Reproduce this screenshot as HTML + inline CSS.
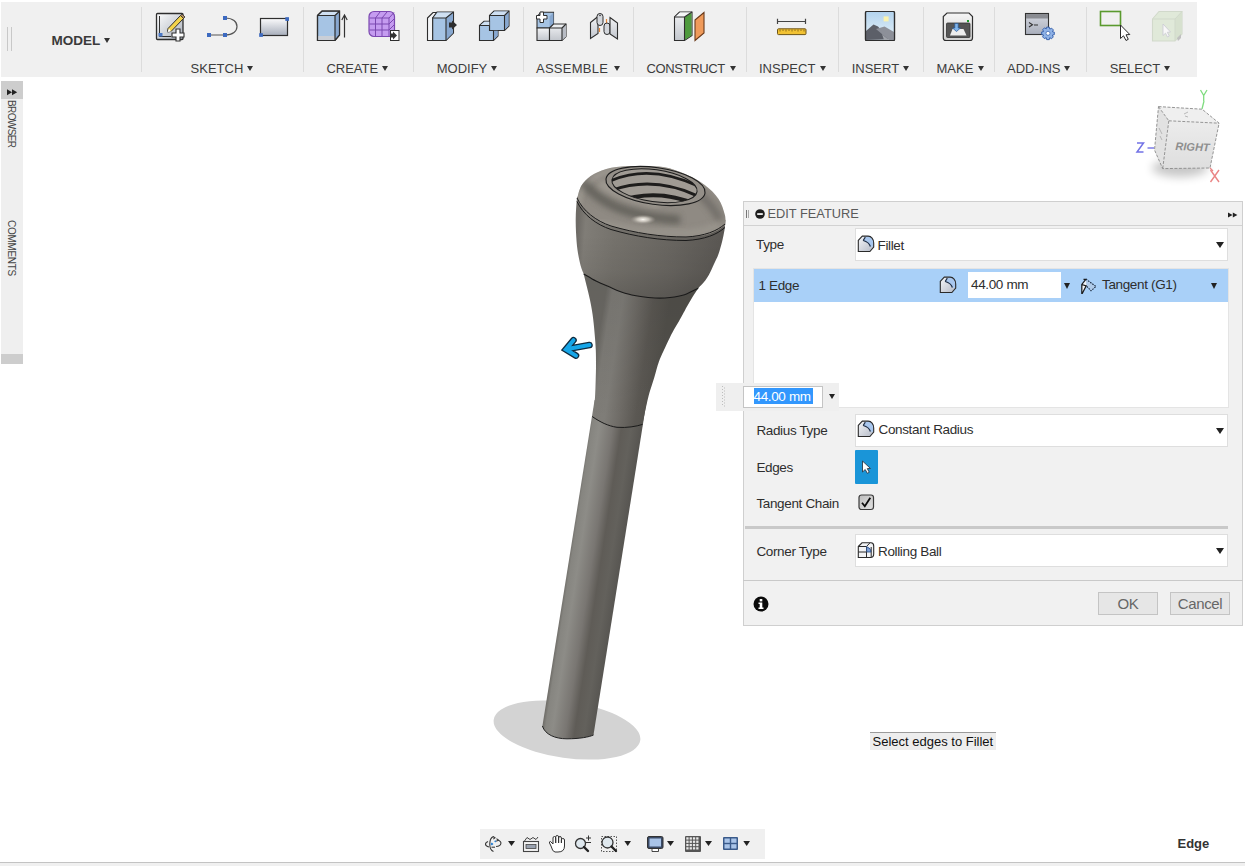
<!DOCTYPE html>
<html><head><meta charset="utf-8">
<style>
*{margin:0;padding:0;box-sizing:border-box}
html,body{width:1245px;height:866px;overflow:hidden;background:#fff;font-family:"Liberation Sans",sans-serif;color:#333}
.abs{position:absolute}
#tb{position:absolute;left:1px;top:2px;width:1196px;height:75px;background:#f0f0f0}
.sep{position:absolute;top:7px;width:1px;height:65px;background:#dcdcdc}
.lbl{position:absolute;top:62px;font-size:13px;color:#3c3c3c;white-space:nowrap;line-height:14px}
.tri2{position:absolute;width:0;height:0;border-left:3.2px solid transparent;border-right:3.2px solid transparent;border-top:5.5px solid #333}
.ico{position:absolute}
#sb{position:absolute;left:1px;top:81px;width:22px;height:283px;background:#efefef}
.vt{position:absolute;font-size:10px;line-height:10px;color:#444;transform-origin:0 0;transform:rotate(90deg);white-space:nowrap;letter-spacing:0.3px}
#dlg{position:absolute;left:743px;top:201px;width:500px;height:425px;background:#f1f1f1;border:1px solid #cfcfcf}
.dl{position:absolute;font-size:13.5px;letter-spacing:-0.35px;color:#2e2e2e;white-space:nowrap;line-height:15px}
.dd{position:absolute;background:#fff;border:1px solid #dedede}
.dtri{position:absolute;width:0;height:0;border-left:4px solid transparent;border-right:4px solid transparent;border-top:6px solid #222}
</style></head><body>

<!-- TOOLBAR -->
<div id="tb">
  <div class="abs" style="left:6px;top:25px;width:1px;height:24px;background:#c8c8c8"></div>
  <div class="abs" style="left:10px;top:25px;width:1px;height:24px;background:#c8c8c8"></div>
</div>
<div class="abs" style="left:51.5px;top:33px;font-size:13.5px;font-weight:bold;color:#3a3a3a;line-height:16px">MODEL</div>
<div class="tri2" style="left:103.5px;top:37.5px"></div>
<div class="sep" style="left:141px"></div>
<div class="sep" style="left:303px"></div>
<div class="sep" style="left:413px"></div>
<div class="sep" style="left:523px"></div>
<div class="sep" style="left:633px"></div>
<div class="sep" style="left:746px"></div>
<div class="sep" style="left:838px"></div>
<div class="sep" style="left:923px"></div>
<div class="sep" style="left:994px"></div>
<div class="sep" style="left:1086px"></div>
<div class="lbl" style="left:190.6px">SKETCH</div>
<div class="tri2" style="left:246.5px;top:65.5px"></div>
<div class="lbl" style="left:326.4px">CREATE</div>
<div class="tri2" style="left:382.0px;top:65.5px"></div>
<div class="lbl" style="left:436.7px">MODIFY</div>
<div class="tri2" style="left:490.8px;top:65.5px"></div>
<div class="lbl" style="left:536.0px;letter-spacing:0.25px">ASSEMBLE</div>
<div class="tri2" style="left:613.9px;top:65.5px"></div>
<div class="lbl" style="left:646.5px;letter-spacing:-0.35px">CONSTRUCT</div>
<div class="tri2" style="left:729.7px;top:65.5px"></div>
<div class="lbl" style="left:759.0px">INSPECT</div>
<div class="tri2" style="left:819.8px;top:65.5px"></div>
<div class="lbl" style="left:851.7px">INSERT</div>
<div class="tri2" style="left:902.6px;top:65.5px"></div>
<div class="lbl" style="left:936.5px">MAKE</div>
<div class="tri2" style="left:978.0px;top:65.5px"></div>
<div class="lbl" style="left:1007.0px">ADD-INS</div>
<div class="tri2" style="left:1064.0px;top:65.5px"></div>
<div class="lbl" style="left:1109.7px">SELECT</div>
<div class="tri2" style="left:1164.0px;top:65.5px"></div>

<svg class="abs" style="left:0;top:0" width="1245" height="80" viewBox="0 0 1245 80">
<defs>
<linearGradient id="gSk" x1="0" y1="0" x2="1" y2="1"><stop offset="0" stop-color="#fdfdfd"/><stop offset="1" stop-color="#a9b0bb"/></linearGradient>
<linearGradient id="gRc" x1="0" y1="0" x2="0" y2="1"><stop offset="0" stop-color="#fbfbfc"/><stop offset="1" stop-color="#a7aebb"/></linearGradient>
<linearGradient id="gBl" x1="0" y1="0" x2="0" y2="1"><stop offset="0" stop-color="#b4cdea"/><stop offset="1" stop-color="#92b4dc"/></linearGradient>
<linearGradient id="gGr" x1="0" y1="0" x2="0" y2="1"><stop offset="0" stop-color="#f2f3f5"/><stop offset="1" stop-color="#c2c6cd"/></linearGradient>
<linearGradient id="gSky" x1="0" y1="0" x2="0" y2="1"><stop offset="0" stop-color="#b3d3ee"/><stop offset="1" stop-color="#e6f2f8"/></linearGradient>
<linearGradient id="gMk" x1="0" y1="0" x2="0" y2="1"><stop offset="0" stop-color="#f6f6f6"/><stop offset="1" stop-color="#cfcfcf"/></linearGradient>
<linearGradient id="gAd" x1="0" y1="0" x2="0" y2="1"><stop offset="0" stop-color="#d5d8e0"/><stop offset="1" stop-color="#a9aebb"/></linearGradient>
</defs>
<!-- grip -->
<!-- Sketch create -->
<rect x="156.5" y="13.5" width="26.5" height="26" rx="1" fill="url(#gSk)" stroke="#2e2e2e" stroke-width="1.3"/>
<path d="M159.5 16 V36.5 H171" fill="none" stroke="#333" stroke-width="1"/>
<rect x="158.5" y="33" width="4" height="3.5" fill="#4a78c8"/>
<path d="M168 28.5 L180.5 15.5 L183.5 18.5 L171 31.5 L167.5 32 Z" fill="#f3d34a" stroke="#2e2e2e" stroke-width="1"/>
<path d="M180.5 15.5 L182 14 L185 17 L183.5 18.5 Z" fill="#b08a60" stroke="#2e2e2e" stroke-width="0.8"/>
<path d="M167.5 32 L169 28.5 L171 31.5 Z" fill="#fff"/>
<path d="M176 29 h4 v4 h4 v4 h-4 v4 h-4 v-4 h-4 v-4 h4 z" fill="#fff" stroke="#2e2e2e" stroke-width="1.1"/>
<!-- arc line -->
<path d="M209 35 H225 M225 18 C233 18 237 22 237 26.5 C237 31 233 35 225 35" fill="none" stroke="#555" stroke-width="1.2"/>
<rect x="207" y="33" width="4" height="4" fill="#3d6ac0"/>
<rect x="223" y="33" width="4" height="4" fill="#3d6ac0"/>
<rect x="223" y="16" width="4" height="4" fill="#3d6ac0"/>
<!-- rect -->
<rect x="260.5" y="18.5" width="27" height="17" fill="url(#gRc)" stroke="#2e2e2e" stroke-width="1.2"/>
<rect x="285.3" y="17.2" width="3.7" height="3.7" fill="#3d6ac0"/>
<rect x="259.2" y="33.2" width="3.7" height="3.7" fill="#3d6ac0"/>
<!-- extrude -->
<path d="M317.5 15.5 L322 11.2 H339.5 V35 L335 40.5 H317.5 Z" fill="#a6c4e4" stroke="#2e2e2e" stroke-width="1.2"/>
<path d="M317.5 15.5 L322 11.5 H339.3 L335 15.5 Z" fill="#cfe0f2"/>
<path d="M335 15.5 L339.3 11.5 V35 L335 40.3 Z" fill="#88a8d0"/>
<path d="M318 36 H335 V40 H318 Z" fill="#c9ced6"/>
<path d="M317.5 15.5 L322 11.2 H339.5 V35 L335 40.5 H317.5 Z M317.5 15.5 H335 V40.5 M335 15.5 L339.5 11.2" fill="none" stroke="#2e2e2e" stroke-width="1.2"/>
<path d="M344.5 37.5 V16" stroke="#333" stroke-width="1.2"/>
<path d="M341.8 20 L344.5 15 L347.2 20" fill="none" stroke="#333" stroke-width="1.2"/>
<!-- form -->
<rect x="369" y="11.5" width="25.5" height="25" rx="5" fill="#c59cf0" stroke="#7b48b0" stroke-width="1.2"/>
<path d="M369.5 18 H389 V36 M375.5 18 V36.5 M382 18 V36.5 M369.5 24 H389 M369.5 30 H389 M389 18 L394 12.5 M375.5 18 L380 12 M382 18 L387 12 M389 24 L394 19 M389 30 L394 25" fill="none" stroke="#7b48b0" stroke-width="1"/>
<rect x="390.5" y="30.5" width="8.5" height="10" fill="#fff" stroke="#2e2e2e" stroke-width="1"/>
<path d="M390 33.5 H393 V31.5 L397 35.5 L393 39.5 V37.5 H390 Z" fill="#333"/>
<!-- press pull -->
<path d="M427.5 18 L433 12.5 H437 L432.7 18 V40.5 H427.5 Z" fill="#f4f5f7" stroke="#2e2e2e" stroke-width="1.1"/>
<path d="M432.7 18 L437 12 H453.5 V33 L446 40.5 H432.7 Z" fill="#a6c4e4" stroke="#2e2e2e" stroke-width="1.1"/>
<path d="M433.5 18 L437.5 12.5 H453 L446 18 Z" fill="#cfe0f2"/>
<path d="M446 18 L453 12.5 V33 L446 40 Z" fill="#88a8d0"/>
<path d="M432.7 18 H446 V40.5 M446 18 L453.5 12" fill="none" stroke="#2e2e2e" stroke-width="1.1"/>
<path d="M449 22.5 H452 V20.5 L457 25 L452 29.5 V27.5 H449 Z" fill="#2e2e2e"/>
<!-- combine -->
<path d="M489.5 15.5 L494 11 H509 V26 L504.5 30.5 H489.5 Z" fill="#a6c4e4" stroke="#2e2e2e" stroke-width="1.1"/>
<path d="M490 15.5 L494.5 11.5 H508.5 L504.5 15.5 Z" fill="#cfe0f2"/>
<path d="M504.5 15.5 L508.5 11.5 V26 L504.5 30 Z" fill="#88a8d0"/>
<path d="M489.5 15.5 H504.5 V30.5 M504.5 15.5 L509 11" fill="none" stroke="#2e2e2e" stroke-width="1.1"/>
<path d="M479.5 25.5 L484 21.3 H489.5 V30.5 H498 V36 L493.5 40.5 H479.5 Z" fill="#a6c4e4" stroke="#2e2e2e" stroke-width="1.1"/>
<path d="M480 25.5 L484.5 21.8 H489.3 V25.5 Z" fill="#cfe0f2"/>
<path d="M493.5 30.8 H497.7 V36 L493.5 40 Z" fill="#88a8d0"/>
<path d="M479.5 25.5 H489.5 M493.5 30.5 V40.5" fill="none" stroke="#2e2e2e" stroke-width="1.1"/>
<!-- assemble new component -->
<path d="M537 16.5 L541 12.2 H553.5 V24 L549.5 28 H537 Z" fill="#a6c4e4" stroke="#2e2e2e" stroke-width="1.1"/>
<path d="M549.5 16.5 L553.5 12.5 V24 L549.5 28 Z" fill="#88a8d0"/>
<path d="M537 28 H549.5 V40.5 H537 Z" fill="url(#gGr)" stroke="#2e2e2e" stroke-width="1.1"/>
<path d="M549.5 28 L553.5 24 H566 V36.5 L562 40.5 H549.5 Z" fill="url(#gGr)" stroke="#2e2e2e" stroke-width="1.1"/>
<path d="M562 28 L566 24 V36.5 L562 40.5 Z" fill="#b8bcc4"/>
<path d="M549.5 28 H562 V40.5 M562 28 L566 24" fill="none" stroke="#2e2e2e" stroke-width="1.1"/>
<path d="M540 12 h3.5 v3.5 h3.5 v3.5 h-3.5 v3.5 h-3.5 v-3.5 h-3.5 v-3.5 h3.5 z" fill="#fff" stroke="#2e2e2e" stroke-width="1"/>
<!-- joint -->
<path d="M590.5 22.5 L598 16.5 V33.5 L590.5 38.5 Z" fill="url(#gGr)" stroke="#2e2e2e" stroke-width="1.1"/>
<rect x="597" y="13.5" width="6" height="12" rx="3" fill="#d4d7dc" stroke="#2e2e2e" stroke-width="1"/>
<circle cx="600" cy="15.5" r="0.8" fill="#333"/>
<path d="M599.5 28 V32 M606.5 19 V23" stroke="#e8873a" stroke-width="1.2"/>
<rect x="604" y="23" width="6" height="11.5" rx="3" fill="#d4d7dc" stroke="#2e2e2e" stroke-width="1"/>
<path d="M610 17.5 L617.5 23 V39 L610 34 Z" fill="url(#gGr)" stroke="#2e2e2e" stroke-width="1.1"/>
<!-- construct -->
<path d="M674.5 17 L679.5 12 H692 V35.5 L684.5 40.5 H674.5 Z" fill="url(#gGr)" stroke="#2e2e2e" stroke-width="1.1"/>
<path d="M684.5 17 L691.5 12.5 V35.5 L684.5 40 Z" fill="#4e9a3e"/>
<path d="M675 17 L680 12.5 H691.5 L684.5 17 Z" fill="#f6f7f8"/>
<path d="M674.5 17 H684.5 V40.5 M684.5 17 L692 12" fill="none" stroke="#2e2e2e" stroke-width="1.1"/>
<path d="M695 20 L704 12.5 V33 L695 40.5 Z" fill="#ef9a5a" stroke="#6a3a1a" stroke-width="1.1"/>
<!-- inspect -->
<path d="M777.5 21.5 H805.5 M777.5 18.7 V24 M805.5 18.7 V24" stroke="#444" stroke-width="1.2"/>
<rect x="777.5" y="28.8" width="28.5" height="5.8" rx="1" fill="#f2c233" stroke="#6e5518" stroke-width="1"/>
<path d="M780 29.5 v2 M783 29.5 v1.5 M786 29.5 v2 M789 29.5 v1.5 M792 29.5 v2 M795 29.5 v1.5 M798 29.5 v2 M801 29.5 v1.5 M804 29.5 v2" stroke="#7a5a10" stroke-width="0.8"/>
<!-- insert -->
<rect x="865.5" y="11.5" width="29" height="29" rx="1" fill="url(#gSky)" stroke="#2e2e2e" stroke-width="1.2"/>
<rect x="883.6" y="16.4" width="5" height="5" fill="#fbf3b0"/>
<path d="M866 31 L873.5 24.5 L878 26.5 L889 39.5 L866 40 Z" fill="#5c5f68"/>
<path d="M876 29 L884.5 26.5 L894 32 V40 H889 Z" fill="#8d9099"/>
<path d="M882 34 L884 36 L889 40 H884 Z" fill="#a0a3aa"/>
<rect x="865.5" y="11.5" width="29" height="29" rx="1" fill="none" stroke="#2e2e2e" stroke-width="1.2"/>
<!-- make -->
<path d="M947 13 H969 L972.5 16.5 V38 Q972.5 40.5 970 40.5 H946 Q943.3 40.5 943.3 38 V16.5 Z" fill="url(#gMk)" stroke="#2e2e2e" stroke-width="1.2"/>
<rect x="946.5" y="23" width="23.5" height="14.5" rx="1" fill="#555" stroke="#333" stroke-width="0.8"/>
<path d="M950 35.5 L952.5 29 H963.5 L966.5 35.5 Z" fill="#eeeeee"/>
<path d="M954.8 23.5 H958.2 V28 H960.5 L956.5 31.5 L952.5 28 H954.8 Z" fill="#7fb4ea" stroke="#2a5a9a" stroke-width="0.7"/>
<rect x="967" y="20" width="2" height="2" fill="#1c9a2a"/>
<!-- add-ins -->
<rect x="1025.5" y="13.5" width="23" height="21" fill="url(#gAd)" stroke="#333" stroke-width="1.1"/>
<rect x="1026" y="14" width="22" height="4.5" fill="#8a8c92"/>
<path d="M1029 22.5 L1032.5 24.7 L1029 27 M1034 25 H1038" fill="none" stroke="#333" stroke-width="1.1"/>
<g transform="translate(1048 33.3) scale(0.88)">
<path d="M-1.5 -7 H1.5 L2 -4.8 L4.2 -5.8 L6.2 -3.8 L5 -1.8 L7.2 -1.3 V1.5 L5 2 L6 4.2 L4 6.2 L2 5 L1.5 7.2 H-1.5 L-2 5 L-4.2 6 L-6.2 4 L-5 2 L-7.2 1.5 V-1.5 L-5 -2 L-6 -4.2 L-4 -6.2 L-2 -5 Z" fill="#8fb2e6" stroke="#2f5aa8" stroke-width="1"/>
<circle r="2.3" fill="#fff" stroke="#2f5aa8" stroke-width="0.8"/>
</g>
<!-- select -->
<rect x="1100.5" y="11.5" width="20" height="14" fill="none" stroke="#5a9a2e" stroke-width="1.6"/>
<path d="M1120.5 25 V38.5 L1123.5 35.8 L1126 40.5 L1128.3 39.3 L1126 34.8 L1129.8 34.5 Z" fill="#fff" stroke="#2a2a2a" stroke-width="1"/>
<g opacity="0.55">
<path d="M1152.5 19 L1159 11.5 H1182 V34 L1175 41 H1152.5 Z" fill="#d4e4c8" stroke="#b9c7ad" stroke-width="1.1"/>
<path d="M1175 19 L1182 11.5 V34 L1175 41 Z" fill="#c3d6b5"/>
<path d="M1152.5 19 H1175 V41 M1175 19 L1182 11.5" fill="none" stroke="#b9c7ad" stroke-width="1"/>
<path d="M1163 24 V35.5 L1165.5 33.2 L1167.5 37 L1169.3 36 L1167.3 32.3 L1170.5 32 Z" fill="#fff" stroke="#aab" stroke-width="0.8"/>
<path d="M1177 38 L1181 34 V38 L1178 41 Z" fill="#999"/>
</g>
</svg>

<!-- MODEL -->
<svg class="abs" style="left:0;top:0" width="1245" height="866" viewBox="0 0 1245 866">
<defs>
<linearGradient id="gShaft" gradientUnits="userSpaceOnUse" x1="562" y1="600" x2="614" y2="608">
 <stop offset="0" stop-color="#6e6c67"/><stop offset="0.06" stop-color="#868580"/><stop offset="0.2" stop-color="#8d8c87"/>
 <stop offset="0.45" stop-color="#797672"/><stop offset="0.62" stop-color="#5f5c57"/><stop offset="0.8" stop-color="#63615c"/><stop offset="1" stop-color="#575551"/>
</linearGradient>
<linearGradient id="gNeck" gradientUnits="userSpaceOnUse" x1="592" y1="380" x2="656" y2="390">
 <stop offset="0" stop-color="#6c6a65"/><stop offset="0.1" stop-color="#7e7c77"/><stop offset="0.28" stop-color="#7f7d78"/>
 <stop offset="0.5" stop-color="#6f6c67"/><stop offset="0.75" stop-color="#5b5853"/><stop offset="1" stop-color="#52504b"/>
</linearGradient>
<linearGradient id="gNeckV" gradientUnits="userSpaceOnUse" x1="0" y1="290" x2="0" y2="420">
 <stop offset="0" stop-color="#000" stop-opacity="0.07"/><stop offset="0.6" stop-color="#000" stop-opacity="0.03"/><stop offset="1" stop-color="#000" stop-opacity="0"/>
</linearGradient>
<linearGradient id="gBody" gradientUnits="userSpaceOnUse" x1="576" y1="250" x2="724" y2="262">
 <stop offset="0" stop-color="#6e6b66"/><stop offset="0.05" stop-color="#807d77"/><stop offset="0.25" stop-color="#75726c"/>
 <stop offset="0.65" stop-color="#686560"/><stop offset="1" stop-color="#595652"/>
</linearGradient>
<linearGradient id="gBodyV" gradientUnits="userSpaceOnUse" x1="0" y1="235" x2="0" y2="296">
 <stop offset="0" stop-color="#000" stop-opacity="0"/><stop offset="0.6" stop-color="#000" stop-opacity="0.05"/><stop offset="1" stop-color="#000" stop-opacity="0.14"/>
</linearGradient>
<linearGradient id="gCapV" gradientUnits="userSpaceOnUse" x1="0" y1="165" x2="0" y2="238">
 <stop offset="0" stop-color="#8f8b85"/><stop offset="0.4" stop-color="#8a8680"/><stop offset="0.72" stop-color="#9a968e"/><stop offset="1" stop-color="#7b7873"/>
</linearGradient>
<radialGradient id="gHi" cx="0.5" cy="0.5" r="0.5"><stop offset="0" stop-color="#fbf8f2"/><stop offset="0.45" stop-color="#d6d1c8" stop-opacity="0.8"/><stop offset="1" stop-color="#a09b93" stop-opacity="0"/></radialGradient>
<filter id="blur3" x="-20%" y="-20%" width="140%" height="140%"><feGaussianBlur stdDeviation="3"/></filter>
<filter id="blur2" x="-20%" y="-20%" width="140%" height="140%"><feGaussianBlur stdDeviation="2"/></filter>
<clipPath id="cCap"><path id="capP" d="M577.1 199.5 C577.5 198.0 578.2 193.3 579.3 190.5 C580.4 187.7 581.1 185.4 583.5 182.7 C585.9 179.9 589.3 176.5 593.9 174.0 C598.5 171.5 604.5 169.0 611.2 167.7 C617.9 166.4 625.6 166.1 634.3 166.0 C642.9 165.9 654.5 165.7 663.1 167.1 C671.8 168.5 679.3 171.6 686.2 174.6 C693.1 177.6 699.3 180.9 704.7 185.0 C710.1 189.1 715.1 193.9 718.5 198.9 C721.9 203.9 723.8 210.7 724.9 215.0 C726.0 219.3 725.3 223.3 725.4 225.0 C716 233 705 236.5 686 237.5 C660 237.5 635 233 611 226.5 C596 222 583 212 577.1 199.5 Z"/></clipPath>
<clipPath id="cHole"><ellipse cx="656" cy="186" rx="51" ry="18.5" transform="rotate(8 656 186)"/></clipPath>
</defs>
<!-- shadow -->
<ellipse cx="567" cy="730" rx="74" ry="28" transform="rotate(8 567 730)" fill="#d3d3d3"/>
<!-- shaft -->
<path d="M594.6 400 L542.4 726 C545 734.5 555 738.8 567 738.8 C580 738.8 589 737 593.5 735 L646.8 400 Z" fill="url(#gShaft)"/>
<path d="M542.4 726 C545 734.5 555 738.8 567 738.8 C580 738.8 589 737 593.5 735" fill="none" stroke="#222" stroke-width="1"/>
<!-- neck -->
<path d="M583.7 273.9 C584.2 276.0 585.8 282.1 586.8 286.4 C587.8 290.7 589.0 295.2 590.0 299.9 C591.0 304.6 591.8 308.9 592.6 314.5 C593.4 320.1 594.1 327.3 594.6 333.2 C595.1 339.1 595.6 344.7 595.8 350.0 C596.0 355.3 596.0 360.0 596.0 365.0 C596.0 370.0 595.9 374.6 595.7 380.0 C595.5 385.4 595.4 391.9 595.0 397.4 C594.6 402.9 593.8 409.7 593.4 413.0 C593.0 416.3 592.6 416.4 592.4 417.1 C600 422 608 426 617 427.3 C627 428 636 426.5 642.6 423.9 C642.8 422.7 643.3 419.9 644.0 416.5 C644.7 413.1 645.9 407.6 646.8 403.6 C647.7 399.6 648.3 396.8 649.5 392.5 C650.7 388.2 652.7 382.8 654.2 377.7 C655.8 372.6 657.2 366.4 658.8 362.0 C660.3 357.6 661.6 355.1 663.5 351.0 C665.4 346.9 668.1 341.1 669.9 337.5 C671.6 333.9 672.5 332.2 674.0 329.5 C675.5 326.8 677.2 324.2 678.8 321.4 C680.4 318.6 682.2 315.2 683.7 312.5 C685.2 309.8 686.2 307.8 687.7 305.2 C689.2 302.6 690.8 299.9 692.5 297.1 C694.2 294.3 697.2 289.7 698.2 288.2 L700 284 L650 280 Z" fill="url(#gNeck)"/>
<path d="M583.7 273.9 C584.2 276.0 585.8 282.1 586.8 286.4 C587.8 290.7 589.0 295.2 590.0 299.9 C591.0 304.6 591.8 308.9 592.6 314.5 C593.4 320.1 594.1 327.3 594.6 333.2 C595.1 339.1 595.6 344.7 595.8 350.0 C596.0 355.3 596.0 360.0 596.0 365.0 C596.0 370.0 595.9 374.6 595.7 380.0 C595.5 385.4 595.4 391.9 595.0 397.4 C594.6 402.9 593.8 409.7 593.4 413.0 C593.0 416.3 592.6 416.4 592.4 417.1 C600 422 608 426 617 427.3 C627 428 636 426.5 642.6 423.9 C642.8 422.7 643.3 419.9 644.0 416.5 C644.7 413.1 645.9 407.6 646.8 403.6 C647.7 399.6 648.3 396.8 649.5 392.5 C650.7 388.2 652.7 382.8 654.2 377.7 C655.8 372.6 657.2 366.4 658.8 362.0 C660.3 357.6 661.6 355.1 663.5 351.0 C665.4 346.9 668.1 341.1 669.9 337.5 C671.6 333.9 672.5 332.2 674.0 329.5 C675.5 326.8 677.2 324.2 678.8 321.4 C680.4 318.6 682.2 315.2 683.7 312.5 C685.2 309.8 686.2 307.8 687.7 305.2 C689.2 302.6 690.8 299.9 692.5 297.1 C694.2 294.3 697.2 289.7 698.2 288.2 L700 284 L650 280 Z" fill="url(#gNeckV)"/>
<!-- body -->
<path d="M577.0 197.0 C576.8 200.0 576.0 209.2 575.8 215.0 C575.6 220.8 575.7 226.2 576.0 232.0 C576.3 237.8 576.7 244.4 577.5 250.0 C578.3 255.6 579.6 261.6 580.6 265.6 C581.6 269.6 583.2 272.5 583.7 273.9 C585.8 275.1 591.9 278.9 596.0 281.0 C600.1 283.1 603.8 284.6 608.6 286.6 C613.4 288.6 619.6 291.6 625.0 293.2 C630.4 294.8 635.7 295.7 640.7 296.5 C645.7 297.3 650.1 297.8 655.0 298.0 C659.9 298.2 665.1 298.1 670.0 297.5 C674.9 296.9 679.8 296.2 684.5 294.7 C689.2 293.1 695.9 289.3 698.2 288.2 C699.2 287.2 702.2 284.2 704.0 282.0 C705.8 279.8 707.1 278.0 708.8 275.0 C710.5 272.0 712.4 267.5 714.0 264.0 C715.6 260.5 717.2 257.7 718.5 254.0 C719.8 250.3 721.0 246.0 722.0 242.0 C723.0 238.0 723.9 233.7 724.5 230.0 C725.1 226.3 725.2 221.7 725.4 220.0 L700 200 L600 190 Z" fill="url(#gBody)"/>
<path d="M577.0 197.0 C576.8 200.0 576.0 209.2 575.8 215.0 C575.6 220.8 575.7 226.2 576.0 232.0 C576.3 237.8 576.7 244.4 577.5 250.0 C578.3 255.6 579.6 261.6 580.6 265.6 C581.6 269.6 583.2 272.5 583.7 273.9 C585.8 275.1 591.9 278.9 596.0 281.0 C600.1 283.1 603.8 284.6 608.6 286.6 C613.4 288.6 619.6 291.6 625.0 293.2 C630.4 294.8 635.7 295.7 640.7 296.5 C645.7 297.3 650.1 297.8 655.0 298.0 C659.9 298.2 665.1 298.1 670.0 297.5 C674.9 296.9 679.8 296.2 684.5 294.7 C689.2 293.1 695.9 289.3 698.2 288.2 C699.2 287.2 702.2 284.2 704.0 282.0 C705.8 279.8 707.1 278.0 708.8 275.0 C710.5 272.0 712.4 267.5 714.0 264.0 C715.6 260.5 717.2 257.7 718.5 254.0 C719.8 250.3 721.0 246.0 722.0 242.0 C723.0 238.0 723.9 233.7 724.5 230.0 C725.1 226.3 725.2 221.7 725.4 220.0 L700 200 L600 190 Z" fill="url(#gBodyV)"/>
<!-- cap -->
<use href="#capP" fill="#8f8a83"/>
<g clip-path="url(#cCap)">
  <path d="M579 206 C578 192 588 180 603 173 C625 165 665 164 692 174 C708 181 720 192 726 206" fill="none" stroke="#a09c94" stroke-width="4" filter="url(#blur2)" opacity="0.9"/>
  <path d="M583 182 C595 197 610 206 630 212 C648 217 662 219 680 220" fill="none" stroke="#615e59" stroke-width="9" filter="url(#blur3)" opacity="0.9"/>
  <path d="M600 183 C612 192 630 198 660 204" fill="none" stroke="#a8a39a" stroke-width="7" filter="url(#blur3)" opacity="0.8"/>
  <path d="M594 222 C615 229 645 233 690 233 C705 232 714 228 720 223" fill="none" stroke="#a29e95" stroke-width="6" filter="url(#blur3)" opacity="0.7"/>
  <path d="M698 193 C710 203 716 212 720 220" fill="none" stroke="#64615c" stroke-width="7" filter="url(#blur3)" opacity="0.7"/>
</g>
<ellipse cx="643" cy="219.5" rx="13" ry="4.8" fill="url(#gHi)"/>
<!-- hole -->
<g transform="rotate(8 655.5 186)">
<ellipse cx="655.5" cy="186" rx="50" ry="18.5" fill="#948f88" stroke="#1c1c1c" stroke-width="1.1"/>
</g>
<clipPath id="cHole2"><ellipse cx="654.5" cy="185.7" rx="43" ry="16" transform="rotate(8 654.5 185.7)"/></clipPath>
<g clip-path="url(#cHole2)">
<rect x="600" y="160" width="110" height="50" fill="#a09b94"/>
<g fill="none" stroke="#1e1d1c">
<path d="M608 182 Q650 162 702 188" stroke-width="2.8"/>
<path d="M610 191 Q655 174 704 199" stroke-width="3"/>
<path d="M616 202 Q660 186 704 208" stroke-width="4"/>
</g>
</g>
<g transform="rotate(8 654.5 185.7)"><ellipse cx="654.5" cy="185.7" rx="43" ry="16" fill="none" stroke="#1c1c1c" stroke-width="1"/></g>
<!-- seams -->
<path d="M577 198 C583 211 596 221 611 226 C635 233 660 237 686 237 C705 236 717 231 725 224" fill="none" stroke="#1a1a1a" stroke-width="1"/>
<path d="M577 201.5 C583 214.5 596 224.5 611 229.5 C635 236.5 660 240.5 686 240.5 C705 239.5 717 234.5 725 227.5" fill="none" stroke="#1a1a1a" stroke-width="1"/>
<path d="M583.7 273.9 C585.8 275.1 591.9 278.9 596.0 281.0 C600.1 283.1 603.8 284.6 608.6 286.6 C613.4 288.6 619.6 291.6 625.0 293.2 C630.4 294.8 635.7 295.7 640.7 296.5 C645.7 297.3 650.1 297.8 655.0 298.0 C659.9 298.2 665.1 298.1 670.0 297.5 C674.9 296.9 679.8 296.2 684.5 294.7 C689.2 293.1 695.9 289.3 698.2 288.2" fill="none" stroke="#1a1a1a" stroke-width="1.1"/>
<path d="M592.2 416.5 C600 422 608 426 617 427.3 C627 428 636 426.5 642.5 424.4" fill="none" stroke="#1a1a1a" stroke-width="1"/>
<!-- arrow -->
<path d="M589.5 345 L567.5 349 M573.5 340.2 L565.8 349.4 L576 355.6" fill="none" stroke="#102c40" stroke-width="6.6" stroke-linecap="round" stroke-linejoin="miter"/>
<path d="M589.5 345 L567.5 349 M573.5 340.2 L565.8 349.4 L576 355.6" fill="none" stroke="#16a6e8" stroke-width="4" stroke-linecap="round" stroke-linejoin="miter"/>
</svg>

<!-- SIDEBAR -->
<div id="sb">
  <div class="abs" style="left:0;top:0;width:22px;height:18px;background:#cdcdcd"></div>
  <svg class="abs" style="left:6px;top:8px" width="11" height="7" viewBox="0 0 11 7"><path d="M0 0.3 L5 3.2 L0 6.2 Z M5 0.3 L10.2 3.2 L5 6.2 Z" fill="#222"/></svg>
  <div class="abs" style="left:0;top:273px;width:22px;height:10px;background:#cdcdcd"></div>
</div>
<div class="vt" style="left:16px;top:100px;letter-spacing:-0.6px">BROWSER</div>
<div class="vt" style="left:16px;top:220px;letter-spacing:-0.3px">COMMENTS</div>

<!-- DIALOG -->
<svg width="0" height="0" style="position:absolute">
  <defs>
    <linearGradient id="gF" x1="0" y1="0" x2="1" y2="1"><stop offset="0" stop-color="#f6f7f9"/><stop offset="1" stop-color="#b3b9c6"/></linearGradient>
    <symbol id="icF" viewBox="0 0 18 18">
      <path d="M1.3 5.3 L5.3 1.1 H11.2 A5.5 6.8 0 0 1 16.7 7.9 V12.1 L12.9 16.5 H1.3 Z" fill="url(#gF)"/>
      <path d="M6.2 5.5 L8.3 2.1 Q10 1.1 11.2 1.1 A5.5 6.8 0 0 1 16.7 7.9 V12 L13.4 11.5 Q12.5 7 6.2 5.5 Z" fill="#a9c7ee"/>
      <path d="M6.2 5.5 Q12 7 13.4 11.5 M6.2 5.5 L8.3 2.1" fill="none" stroke="#1d2d45" stroke-width="1.2"/>
      <path d="M1.3 5.3 L5.3 1.1 H11.2 A5.5 6.8 0 0 1 16.7 7.9 V12.1 L12.9 16.5 H1.3 Z" fill="none" stroke="#2a2a2a" stroke-width="1.1"/>
    </symbol>
  </defs>
</svg>
<div id="dlg">
  <div class="abs" style="left:0;top:0;width:498px;height:24px;border-bottom:1px solid #d2d2d2"></div>
  <div class="abs" style="left:2px;top:8px;width:1px;height:8px;background:#777"></div>
  <div class="abs" style="left:4px;top:8px;width:1px;height:8px;background:#aaa"></div>
  <svg class="abs" style="left:11px;top:6.5px" width="10" height="10" viewBox="0 0 10 10"><circle cx="5" cy="5" r="4.8" fill="#1e1e1e"/><rect x="2.2" y="4.2" width="5.6" height="1.7" fill="#fff"/></svg>
  <div class="dl" style="left:23.5px;top:3.5px;font-size:12.8px;letter-spacing:0;color:#5a5a5a">EDIT FEATURE</div>
  <svg class="abs" style="left:484px;top:10px" width="11" height="7" viewBox="0 0 11 7"><path d="M0 0.5 L4.6 3 L0 5.5 Z M4.8 0.5 L9.4 3 L4.8 5.5 Z" fill="#222"/></svg>

  <div class="dl" style="left:12px;top:34.5px">Type</div>
  <div class="dd" style="left:110.5px;top:26px;width:373.5px;height:33px"></div>
  <svg class="abs" style="left:113px;top:33px" width="18" height="18"><use href="#icF"/></svg>
  <div class="dl" style="left:133.5px;top:35.8px">Fillet</div>
  <div class="dtri" style="left:472.4px;top:40px"></div>

  <div class="abs" style="left:8.5px;top:66px;width:476px;height:140px;background:#fff;border:1px solid #e4e4e4"></div>
  <div class="abs" style="left:9.5px;top:66.5px;width:474px;height:33.5px;background:#a9d0f8"></div>
  <div class="dl" style="left:14.5px;top:76px">1 Edge</div>
  <svg class="abs" style="left:194.5px;top:74px" width="18" height="18"><use href="#icF"/></svg>
  <div class="abs" style="left:223.5px;top:70px;width:93.5px;height:26px;background:#fff"></div>
  <div class="dl" style="left:227px;top:75px">44.00 mm</div>
  <div class="dtri" style="left:320px;top:81px;border-width:6px 3.3px 0 3.3px"></div>
  <svg class="abs" style="left:336px;top:74px" width="18" height="18" viewBox="0 0 18 18">
    <path d="M1.8 18 L1.8 8 L6 3.2 L16 10.5 L11 14.8 L6.2 9.8 Z" fill="#b0cbea"/>
    <path d="M2.2 9 L6 4.5 L6.3 9.6 L2.2 18 Z" fill="#f4f4f6"/>
    <path d="M1.8 18 V8.5 L5.8 3.3 H3.5 M1.8 8.5 L6.2 9.8 L2 18" fill="none" stroke="#1a1a1a" stroke-width="1.2"/>
    <path d="M6 3.2 L16 10.5 L11 14.8 L6.2 9.8" fill="none" stroke="#1a2a40" stroke-width="1.1" stroke-dasharray="1.6 1"/>
  </svg>
  <div class="dl" style="left:358px;top:75px">Tangent (G1)</div>
  <div class="dtri" style="left:467px;top:81px;border-width:6px 3.4px 0 3.4px"></div>

  <div class="dl" style="left:12.4px;top:220.5px">Radius Type</div>
  <div class="dd" style="left:111px;top:211.5px;width:373px;height:33px"></div>
  <svg class="abs" style="left:113px;top:218px" width="18" height="18"><use href="#icF"/></svg>
  <div class="dl" style="left:134.5px;top:220px">Constant Radius</div>
  <div class="dtri" style="left:472.4px;top:226px"></div>

  <div class="dl" style="left:12.4px;top:257.5px">Edges</div>
  <div class="abs" style="left:110.7px;top:247.5px;width:23px;height:34px;background:#1a95d8;border-radius:1px"></div>
  <svg class="abs" style="left:117px;top:256.5px" width="12" height="16" viewBox="0 0 12 16"><path d="M1.5 2 V13 L4.2 10.5 L6.3 14.3 L8.3 13.3 L6.3 9.6 L9.5 9.5 Z" fill="#fff" stroke="#2a3a4a" stroke-width="0.9"/></svg>

  <div class="dl" style="left:12.4px;top:293.5px">Tangent Chain</div>
  <svg class="abs" style="left:113.5px;top:292px" width="17" height="17" viewBox="0 0 17 17">
    <defs><linearGradient id="gCb" x1="0" y1="0" x2="1" y2="1"><stop offset="0" stop-color="#bdbdbd"/><stop offset="1" stop-color="#e2e2e2"/></linearGradient></defs>
    <rect x="1" y="1" width="14.5" height="14.5" rx="2.5" fill="url(#gCb)" stroke="#3a3a3a" stroke-width="1.2"/>
    <path d="M4 8.8 L6.8 12.2 L12.3 3.8" fill="none" stroke="#0a0a0a" stroke-width="1.8"/>
  </svg>

  <div class="abs" style="left:0.8px;top:324.2px;width:483.7px;height:3.3px;background:#c9c9c9"></div>
  <div class="dl" style="left:12.4px;top:341.5px">Corner Type</div>
  <div class="dd" style="left:111px;top:332.3px;width:373px;height:33px"></div>
  <svg class="abs" style="left:113px;top:339px" width="18" height="18" viewBox="0 0 18 18">
    <path d="M1.3 5.5 L5 1.8 H14 Q16.7 1.8 16.7 5 V13 Q16.7 16.5 13.5 16.5 H1.3 Z" fill="#f2f3f5" stroke="#2b2b2b" stroke-width="1.1"/>
    <path d="M1.3 5.5 H9.5 V16.5 M1.3 11 H9.5 M9.5 5.5 L13 1.8 M14.2 6 V16" fill="none" stroke="#2b2b2b" stroke-width="1"/>
    <path d="M9.6 5.6 Q14.5 7.5 14 11 L9.7 11 Z" fill="#7ea2da" stroke="#2a4a80" stroke-width="0.8"/>
  </svg>
  <div class="dl" style="left:134px;top:341.5px">Rolling Ball</div>
  <div class="dtri" style="left:472.4px;top:346px"></div>

  <div class="abs" style="left:-1px;top:378.4px;width:500px;height:1px;background:#c9c9c9"></div>
  <svg class="abs" style="left:9px;top:393.5px" width="17" height="17" viewBox="0 0 17 17"><circle cx="8" cy="8" r="7.5" fill="#0a0a0a"/><rect x="6.7" y="3" width="2.6" height="2.4" fill="#fff"/><path d="M5.5 6.5 H9.3 V11.5 H10.5 V13 H5.5 V11.5 H6.7 V8 H5.5 Z" fill="#fff"/></svg>
  <div class="abs" style="left:354px;top:390px;width:60px;height:23px;background:#e6e6e6;border:1px solid #c4c4c4"></div>
  <div class="dl" style="left:354px;top:393px;width:60px;text-align:center;font-size:15px;line-height:17px;color:#666">OK</div>
  <div class="abs" style="left:426px;top:390px;width:60px;height:23px;background:#e6e6e6;border:1px solid #c4c4c4"></div>
  <div class="dl" style="left:426px;top:393px;width:60px;text-align:center;font-size:15px;line-height:17px;color:#666">Cancel</div>
</div>

<!-- floating input -->
<div class="abs" style="left:716px;top:383px;width:122.5px;height:27.5px;background:#efefef"></div>
<svg class="abs" style="left:720.5px;top:386px" width="5" height="22" viewBox="0 0 5 22"><rect x="1" y="0.0" width="1" height="1" fill="#bdbdbd"/><rect x="3" y="1.5" width="1" height="1" fill="#bdbdbd"/><rect x="1" y="3.0" width="1" height="1" fill="#bdbdbd"/><rect x="3" y="4.5" width="1" height="1" fill="#bdbdbd"/><rect x="1" y="6.0" width="1" height="1" fill="#bdbdbd"/><rect x="3" y="7.5" width="1" height="1" fill="#bdbdbd"/><rect x="1" y="9.0" width="1" height="1" fill="#bdbdbd"/><rect x="3" y="10.5" width="1" height="1" fill="#bdbdbd"/><rect x="1" y="12.0" width="1" height="1" fill="#bdbdbd"/><rect x="3" y="13.5" width="1" height="1" fill="#bdbdbd"/><rect x="1" y="15.0" width="1" height="1" fill="#bdbdbd"/><rect x="3" y="16.5" width="1" height="1" fill="#bdbdbd"/><rect x="1" y="18.0" width="1" height="1" fill="#bdbdbd"/><rect x="3" y="19.5" width="1" height="1" fill="#bdbdbd"/></svg>
<div class="abs" style="left:742.5px;top:385.5px;width:80px;height:22px;background:#fff;border:1px solid #c4c4c4"></div>
<div class="abs" style="left:754.2px;top:388.4px;width:58.6px;height:15.2px;background:#3297fd"></div>
<div class="dl" style="left:753.5px;top:388.5px;color:#fff">44.00 mm</div>
<div class="dtri" style="left:829px;top:394px;border-width:5.5px 3.5px 0 3.5px"></div>

<!-- VIEWCUBE -->
<svg class="abs" style="left:1120px;top:80px" width="125" height="110" viewBox="1120 80 125 110">
<defs>
<linearGradient id="gCube" x1="0" y1="0" x2="0" y2="1"><stop offset="0" stop-color="#ececec"/><stop offset="1" stop-color="#dedede"/></linearGradient>
<filter id="cshadow" x="-50%" y="-50%" width="200%" height="200%"><feGaussianBlur stdDeviation="5"/></filter>
</defs>
<ellipse cx="1180" cy="168" rx="28" ry="9" fill="#000" opacity="0.22" filter="url(#cshadow)"/>
<path d="M1158.5 106.6 L1168.8 120.8 L1162.7 168.6 L1154.5 150 Z" fill="#e2e2e2"/>
<path d="M1158.5 106.6 L1202.1 109.2 L1219.1 123.2 L1168.8 120.8 Z" fill="#efefef"/>
<path d="M1168.8 120.8 L1219.1 123.2 L1210 168 L1162.7 168.6 Z" fill="url(#gCube)"/>
<path d="M1158.5 106.6 L1202.1 109.2 L1219.1 123.2 L1210 168 L1162.7 168.6 L1154.5 150 Z M1168.8 120.8 L1219.1 123.2 M1168.8 120.8 L1162.7 168.6 M1158.5 106.6 L1168.8 120.8" fill="none" stroke="#8a8a8a" stroke-width="0.9" stroke-dasharray="3 1.5"/>
<text x="1175.5" y="150.5" font-family="Liberation Sans" font-size="11" font-weight="bold" font-style="italic" fill="#8e8e8e" transform="rotate(2 1190 146)">RIGHT</text>
<path d="M1184 114 l4 -2 M1185 116 l3 1" stroke="#aaa" stroke-width="0.8"/>
<path d="M1159 128 l3 6 M1160 136 l2 4" stroke="#aaa" stroke-width="0.8"/>
<path d="M1202 109 L1204 101" stroke="#7fdc7f" stroke-width="1.3"/>
<path d="M1200.5 90 L1203.7 95.5 L1207 90 M1203.7 95.5 V101" fill="none" stroke="#7fdc7f" stroke-width="1.3"/>
<path d="M1147.5 148 H1154" stroke="#7272e6" stroke-width="1.4"/>
<path d="M1137 143 H1143.5 L1137 152 H1143.5" fill="none" stroke="#7272e6" stroke-width="1.5"/>
<path d="M1210 168 L1213 171" stroke="#ea8585" stroke-width="1.3"/>
<path d="M1210.5 170 L1219 182 M1219 170 L1210.5 182" stroke="#ea8585" stroke-width="1.4"/>
</svg>

<!-- TOOLTIP -->
<div class="abs" style="left:869.5px;top:732px;width:126.5px;height:18px;background:#ededed;border-top:1.5px solid #9a9a9a"></div>
<div class="abs" style="left:872.5px;top:733.5px;font-size:13px;line-height:15px;color:#111;white-space:nowrap">Select edges to Fillet</div>

<!-- NAV BAR -->
<div class="abs" style="left:480px;top:829px;width:284.5px;height:30px;background:#f0f0f0"></div>
<svg class="abs" style="left:0;top:820px" width="1245" height="46" viewBox="0 820 1245 46">
<!-- orbit -->
<g fill="none" stroke="#3a3a3a" stroke-width="1.1">
<path d="M493.5 836.5 C488.5 838.5 488.5 849.5 493.5 851.5"/>
<path d="M488 841.5 C484.5 843 484.5 846 489 847"/>
<path d="M496 846.5 C502 846 502.5 841.5 497.5 840"/>
<path d="M493 836.5 L495 837.8 L493.3 839.2"/>
<path d="M496.5 838.6 L498.5 840.2 L496.2 841.2"/>
<path d="M491.5 847.2 H495"/>
</g>
<path d="M490.3 844 l1.6 -1.6 l1.6 1.6 l-1.6 1.6 z M494.2 841.3 l1.1 -1.1 l1.1 1.1 l-1.1 1.1 z" fill="#2a7fd0"/>
<path d="M508 841 H515 L511.5 846 Z" fill="#222"/>
<!-- camera -->
<rect x="523.5" y="841.5" width="15" height="10" fill="#f4f4f4" stroke="#444" stroke-width="1.1"/>
<rect x="526" y="844.5" width="10" height="4" fill="#9aa2b0" stroke="#444" stroke-width="0.8"/>
<path d="M524.5 841 L527 837.5 L530 839.5 L533 837.5 L536 839.5 L538 837" fill="none" stroke="#444" stroke-width="1"/>
<!-- hand -->
<path d="M551 846 L549.5 843 Q549 841.5 550.5 841.5 L553 844 V838 Q553 836.5 554.5 836.5 Q555.7 836.5 555.7 838 V843 V837 Q555.7 835.5 557.2 835.5 Q558.6 835.5 558.6 837 V843 V838 Q558.6 836.5 560 836.5 Q561.4 836.5 561.4 838 V843 V840 Q561.4 838.5 562.8 838.5 Q564.5 838.5 564.5 840 V846 Q564.5 852 558 852 H555 Q552.5 852 551 846 Z" fill="#fff" stroke="#333" stroke-width="1"/>
<!-- zoom +- -->
<circle cx="580.5" cy="843.5" r="5" fill="#dfe8ee" stroke="#333" stroke-width="1.3"/>
<path d="M584 847 L588 851" stroke="#222" stroke-width="2.4" stroke-linecap="round"/>
<path d="M586 838 H591 M588.5 835.5 V840.5 M586 842.5 H591" stroke="#333" stroke-width="1"/>
<!-- zoom window -->
<rect x="601.5" y="836.5" width="15" height="15" fill="none" stroke="#444" stroke-width="0.9" stroke-dasharray="1.5 1.5"/>
<circle cx="607.5" cy="842.5" r="5.5" fill="#dfe8ee" stroke="#333" stroke-width="1.3"/>
<path d="M611.5 846.5 L616 851" stroke="#222" stroke-width="2.4" stroke-linecap="round"/>
<path d="M624.4 841 H631 L627.7 846 Z" fill="#222"/>
<!-- display -->
<rect x="647.5" y="836.5" width="15.5" height="12" rx="1.5" fill="#3a4a66" stroke="#333" stroke-width="1"/>
<rect x="649.5" y="838.5" width="11.5" height="8" fill="#a9c4e8"/>
<path d="M652 849 V851.5 H658.5 V849" fill="#fff" stroke="#333" stroke-width="0.9"/>
<path d="M667 841 H674 L670.5 846 Z" fill="#222"/>
<!-- grid -->
<rect x="685" y="836" width="16" height="16" rx="1" fill="#555"/>
<g fill="#e8e8e8">
<rect x="686.3" y="837.3" width="2.3" height="2.3"/><rect x="689.6" y="837.3" width="2.3" height="2.3"/><rect x="692.9" y="837.3" width="2.3" height="2.3"/><rect x="696.2" y="837.3" width="2.3" height="2.3"/>
<rect x="686.3" y="840.6" width="2.3" height="2.3"/><rect x="689.6" y="840.6" width="2.3" height="2.3"/><rect x="692.9" y="840.6" width="2.3" height="2.3"/><rect x="696.2" y="840.6" width="2.3" height="2.3"/>
<rect x="686.3" y="843.9" width="2.3" height="2.3"/><rect x="689.6" y="843.9" width="2.3" height="2.3"/><rect x="692.9" y="843.9" width="2.3" height="2.3"/><rect x="696.2" y="843.9" width="2.3" height="2.3"/>
<rect x="686.3" y="847.2" width="2.3" height="2.3"/><rect x="689.6" y="847.2" width="2.3" height="2.3"/><rect x="692.9" y="847.2" width="2.3" height="2.3"/><rect x="696.2" y="847.2" width="2.3" height="2.3"/>
</g>
<path d="M705 841 H712 L708.5 846 Z" fill="#222"/>
<!-- viewports -->
<rect x="723" y="837" width="15" height="13" rx="1" fill="#3a5a8a"/>
<rect x="724.5" y="838.5" width="5.3" height="4.3" fill="#a9c4e8"/><rect x="731.2" y="838.5" width="5.3" height="4.3" fill="#a9c4e8"/>
<rect x="724.5" y="844.2" width="5.3" height="4.3" fill="#a9c4e8"/><rect x="731.2" y="844.2" width="5.3" height="4.3" fill="#a9c4e8"/>
<path d="M743.3 841 H750 L746.7 846 Z" fill="#222"/>
</svg>

<!-- STATUS -->
<div class="abs" style="left:1177.5px;top:835.5px;font-size:13px;font-weight:bold;line-height:15px;color:#333">Edge</div>
<div class="abs" style="left:0;top:862px;width:1245px;height:1px;background:#c3c3c3"></div>
<div class="abs" style="left:0;top:863px;width:1245px;height:3px;background:#f0f0f0"></div>

</body></html>
